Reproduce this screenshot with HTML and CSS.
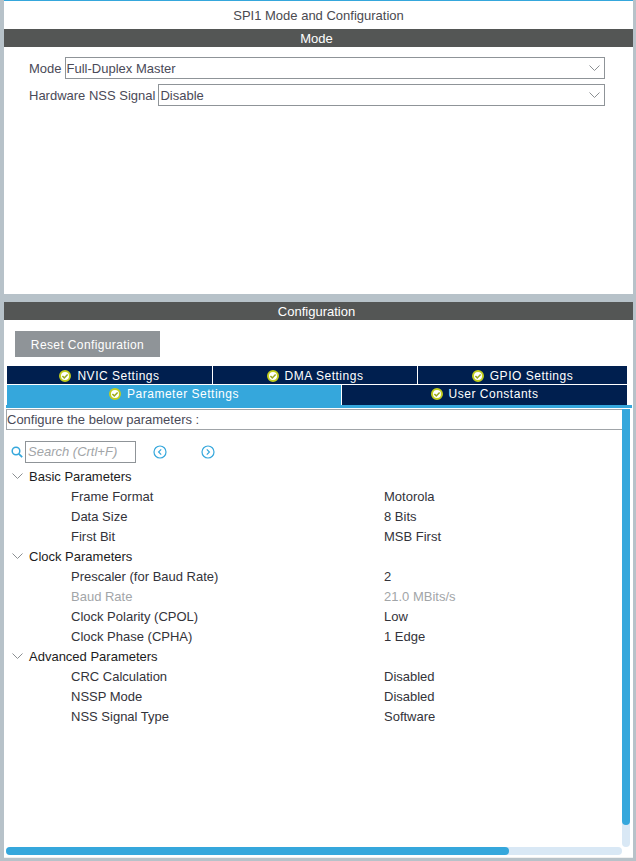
FILE: index.html
```html
<!DOCTYPE html>
<html lang="en">
<head>
<meta charset="utf-8">
<title>SPI1 Mode and Configuration</title>
<link rel="stylesheet" href="styles.css">
</head>
<body>
<svg class="defs" width="0" height="0" aria-hidden="true">
  <symbol id="ok" viewBox="0 0 12 12">
    <circle cx="6" cy="6" r="5" fill="#fff" stroke="#c3ce1e" stroke-width="2"/>
    <path d="M3.4 6l1.9 1.9 3.3-3.4" fill="none" stroke="#9aa81a" stroke-width="1.5"/>
  </symbol>
  <symbol id="chev" viewBox="0 0 11 6">
    <path d="M.5.5l5 5 5-5" fill="none" stroke="#8b8f92" stroke-width="1"/>
  </symbol>
</svg>
<main class="window">
  <section class="mode-panel">
    <h1 class="title">SPI1 Mode and Configuration</h1>
    <h2 class="bar">Mode</h2>
    <div class="mode-form">
      <div class="field">
        <span class="field-label">Mode</span>
        <div class="select"><span>Full-Duplex Master</span><svg class="select-chev"><use href="#chev"/></svg></div>
      </div>
      <div class="field">
        <span class="field-label">Hardware NSS Signal</span>
        <div class="select"><span>Disable</span><svg class="select-chev"><use href="#chev"/></svg></div>
      </div>
    </div>
  </section>
  <section class="config-panel">
    <h2 class="bar">Configuration</h2>
    <button class="reset" type="button">Reset Configuration</button>
    <div class="tabs tabs-top">
      <div class="tab tab-a"><svg class="ok"><use href="#ok"/></svg>NVIC Settings</div>
      <div class="tab tab-b"><svg class="ok"><use href="#ok"/></svg>DMA Settings</div>
      <div class="tab tab-c"><svg class="ok"><use href="#ok"/></svg>GPIO Settings</div>
    </div>
    <div class="tabs tabs-bottom">
      <div class="tab tab-active"><svg class="ok"><use href="#ok"/></svg>Parameter Settings</div>
      <div class="tab tab-d"><svg class="ok"><use href="#ok"/></svg>User Constants</div>
    </div>
    <div class="tab-rule"></div>
    <div class="scroller">
      <div class="content">
        <div class="hint">Configure the below parameters :</div>
        <div class="search-row">
          <svg class="search-icon" viewBox="0 0 12 12"><circle cx="5" cy="5" r="3.8" fill="none" stroke="#35a7dc" stroke-width="1.5"/><path d="M7.8 7.8l3.4 3.4" stroke="#35a7dc" stroke-width="1.7"/></svg>
          <div class="search">Search (Crtl+F)</div>
          <svg class="nav nav-prev" viewBox="0 0 14 14"><circle cx="7" cy="7" r="6" fill="none" stroke="#35a7dc" stroke-width="1.2"/><path d="M8.2 4.4L5.6 7l2.6 2.6" fill="none" stroke="#35a7dc" stroke-width="1.2"/></svg>
          <svg class="nav nav-next" viewBox="0 0 14 14"><circle cx="7" cy="7" r="6" fill="none" stroke="#35a7dc" stroke-width="1.2"/><path d="M5.8 4.4L8.4 7l-2.6 2.6" fill="none" stroke="#35a7dc" stroke-width="1.2"/></svg>
        </div>
        <div class="tree">
          <div class="group"><svg class="tree-chev"><use href="#chev"/></svg>Basic Parameters</div>
          <div class="row"><span class="name">Frame Format</span><span class="value">Motorola</span></div>
          <div class="row"><span class="name">Data Size</span><span class="value">8 Bits</span></div>
          <div class="row"><span class="name">First Bit</span><span class="value">MSB First</span></div>
          <div class="group"><svg class="tree-chev"><use href="#chev"/></svg>Clock Parameters</div>
          <div class="row"><span class="name">Prescaler (for Baud Rate)</span><span class="value">2</span></div>
          <div class="row row-off"><span class="name">Baud Rate</span><span class="value">21.0 MBits/s</span></div>
          <div class="row"><span class="name">Clock Polarity (CPOL)</span><span class="value">Low</span></div>
          <div class="row"><span class="name">Clock Phase (CPHA)</span><span class="value">1 Edge</span></div>
          <div class="group"><svg class="tree-chev"><use href="#chev"/></svg>Advanced Parameters</div>
          <div class="row"><span class="name">CRC Calculation</span><span class="value">Disabled</span></div>
          <div class="row"><span class="name">NSSP Mode</span><span class="value">Disabled</span></div>
          <div class="row"><span class="name">NSS Signal Type</span><span class="value">Software</span></div>
        </div>
      </div>
      <div class="vbar"><div class="vthumb"></div></div>
      <div class="hbar"><div class="hthumb"></div></div>
    </div>
  </section>
</main>
</body>
</html>
```
FILE: styles.css
```css
* { box-sizing: border-box; }
html, body { margin: 0; height: 100%; }
body {
  width: 636px;
  height: 861px;
  overflow: hidden;
  background: #b7c2c9;
  font-family: "Liberation Sans", Arial, sans-serif;
  font-size: 13px;
  color: #3d3d44;
}
.defs { position: absolute; }
.window {
  display: flex;
  flex-direction: column;
  gap: 8px;
  width: 629px;
  margin-left: 4px;
  border-top: 1px solid #35a7dc;
}
.mode-panel { height: 293px; background: #fff; }
.title {
  margin: 0;
  height: 28px;
  font-size: 13px;
  font-weight: 400;
  line-height: 29px;
  text-align: center;
  color: #4a4a50;
}
.bar {
  margin: 0;
  height: 18px;
  padding-right: 4px;
  background: #545655;
  color: #fff;
  font-size: 13px;
  font-weight: 400;
  line-height: 19px;
  text-align: center;
}
.mode-form {
  display: flex;
  flex-direction: column;
  gap: 5px;
  padding: 10px 28px 0 25px;
}
.field { display: flex; align-items: center; gap: 3px; height: 22px; }
.field-label { white-space: nowrap; color: #4a4a58; }
.select {
  flex: 1;
  display: flex;
  align-items: center;
  justify-content: space-between;
  height: 22px;
  padding: 0 4px 0 1px;
  border: 1px solid #8f9498;
  color: #4a4a58;
}
.select-chev { width: 11px; height: 6px; }
.config-panel { height: 556px; background: #fff; border-bottom: 1px solid #f0f0f0; }
.reset {
  display: block;
  width: 145px;
  height: 26px;
  margin: 11px 0 9px 11px;
  padding: 1px 0 0;
  border: 0;
  background: #8f9498;
  color: #fff;
  font: 12px "Liberation Sans", Arial, sans-serif;
  letter-spacing: .38px;
}
.tabs { display: flex; gap: 1px; margin: 0 6px 0 3px; }
.tabs-top { height: 18px; margin-bottom: 1px; }
.tabs-bottom { height: 20px; }
.tab {
  display: flex;
  align-items: center;
  justify-content: center;
  gap: 6px;
  background: #001f4f;
  color: #fff;
  font-size: 12px;
  letter-spacing: .52px;
  white-space: nowrap;
}
.tabs-top .tab { padding-top: 1px; }
.tabs-bottom .tab { padding-bottom: 2px; }
.tab-a { width: 205px; }
.tab-b { width: 204px; }
.tab-c { flex: 1; }
.tab-active { width: 334px; background: #35a7dc; }
.tab-d { flex: 1; }
.ok { width: 12px; height: 12px; flex: none; }
.tab-rule { height: 3px; margin: 0 1px 0 2px; background: #35a7dc; }
.scroller {
  display: grid;
  grid-template-columns: 616px 8px;
  grid-template-rows: 438px 8px;
  margin-left: 2px;
  margin-top: 1px;
}
.content { min-width: 0; }
.hint {
  height: 21px;
  border: 1px solid #a0a4a8;
  border-right: 0;
  line-height: 19px;
  color: #4a4a58;
}
.search-row { display: flex; align-items: center; height: 22px; margin-top: 11px; padding-left: 5px; }
.search-icon { width: 12px; height: 12px; flex: none; }
.search {
  width: 111px;
  height: 22px;
  margin-left: 2px;
  padding-left: 2px;
  border: 1px solid #8f9498;
  font-style: italic;
  line-height: 20px;
  color: #a2a5a8;
}
.nav { width: 14px; height: 14px; flex: none; }
.nav-prev { margin-left: 17px; }
.nav-next { margin-left: 34px; }
.tree { margin-top: 3px; }
.group {
  display: flex;
  align-items: center;
  height: 20px;
  padding-left: 6px;
  color: #1c1c22;
}
.tree-chev { width: 11px; height: 6px; margin-right: 6px; flex: none; }
.row { display: flex; height: 20px; align-items: center; color: #33333a; }
.name { width: 378px; padding-left: 65px; flex: none; }
.row-off { color: #a2a5a8; }
.vbar { background: #d9e8f5; border-radius: 4px; }
.vthumb { height: 416px; background: #35a7dc; border-radius: 0 0 4px 4px; }
.hbar { background: #d9e8f5; border-radius: 4px; }
.hthumb { width: 503px; height: 100%; background: #35a7dc; border-radius: 4px; }
```
